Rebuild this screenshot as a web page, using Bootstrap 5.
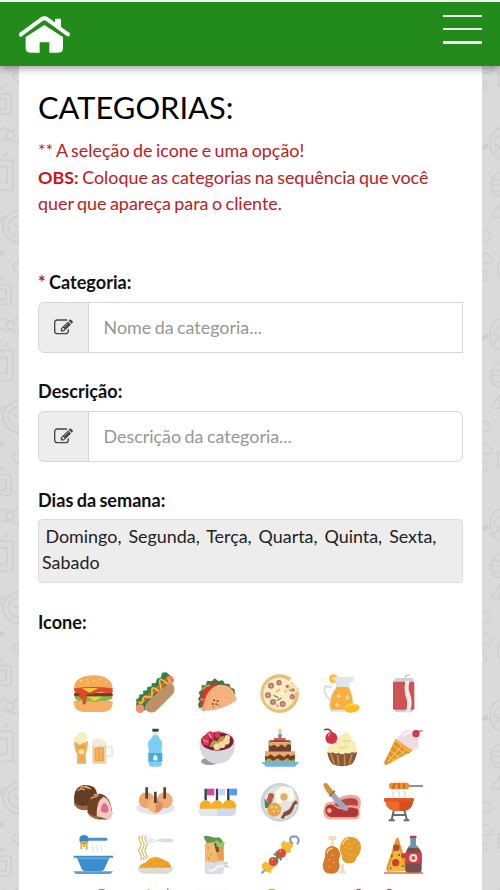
<!DOCTYPE html>
<html lang="pt-BR">
<head>
<meta charset="utf-8">
<meta name="viewport" content="width=device-width, initial-scale=1">
<title>Categorias</title>
<link href="https://cdn.jsdelivr.net/npm/bootstrap@5.3.0/dist/css/bootstrap.min.css" rel="stylesheet">
<style>
  body{font-family:Lato,"Open Sans",sans-serif;font-size:17.9px;word-spacing:-1.1px;line-height:26.6px;color:#111;background:#dadada;height:890px;overflow:hidden}
  .topbar{height:66px;background:#228b1b;border-top:2px solid #eef8ee;box-shadow:0 2px 8px rgba(0,0,0,.42);padding:0 18px 0 19px;z-index:2}
  .home-ico{width:51px;height:37px;display:block}
  .menu-btn{width:39px;height:29px;margin-top:-10px}
  .menu-btn span{height:2.5px;background:#effbed}
  .edge{width:19px;flex:none}
  .edge.right{width:18px}
  .edge svg{display:block}
  .sheet{background:#fff;padding:22px 19px 0 19px;height:824px;min-width:0}
  .page-title{font-size:30.85px;line-height:40px;font-weight:400;color:#000;margin:0 0 9px}
  .notice{color:#bb2022;height:79px;margin-bottom:53px}
  .notice b,.req{color:#cc1417}
  .field-label{font-weight:700;font-size:18.1px;line-height:26px;display:block;margin:0}
  .field{height:51px;margin-top:6.500px;margin-bottom:25.500px}
  .field .input-group-text{width:50.500px;background:#ededed;border-color:#d6d6d6;color:#444}
  .field .form-control{font-size:17.9px;word-spacing:-1.1px;border-color:#d6d6d6;padding:0 15px;color:#111}
  .field .form-control::placeholder{color:#969696;opacity:1}
  .first .form-control{border-radius:0}
  .days{background:#ededed;border:1px solid #dcdcdc;border-radius:4px;height:64px;padding:3px 3px;line-height:26px;margin:6px 0 26px;white-space:pre-wrap;color:#222}
  .icon-grid{display:grid;grid-template-columns:repeat(6,62.2px);grid-auto-rows:53.7px;margin:32.500px 0 0 24px;justify-items:center;align-items:center}
  .icon-grid svg{width:40px;height:40px;display:block;overflow:visible}
</style>
</head>
<body>
<header class="topbar d-flex justify-content-between align-items-center position-relative">
  <a href="#" aria-label="Início"><svg class="home-ico" viewBox="57 46 153 111"><path d="M62 102L124 56q9-6 18 0L204 101" fill="none" stroke="#fcfffb" stroke-width="12" stroke-linecap="round"/><path d="M165 70V57q0-3 3-3h12q3 0 3 3v28z" fill="#fcfffb"/><path d="M77 109L133 73 189 109V143q0 13-13 13H148V125H119V156H90q-13 0-13-13z" fill="#fcfffb"/></svg></a>
  <div class="menu-btn d-flex flex-column justify-content-between" role="button" aria-label="Menu"><span></span><span></span><span></span></div>
</header>
<div class="d-flex">
  <div class="edge"><svg width="19" height="824"><defs><pattern id="pl" width="19" height="190.500" patternUnits="userSpaceOnUse" y="0"><g fill="none" stroke="#cfcfcf" stroke-width="1.800"><path d="M19 6q-7 0-6 6l6 5M0 28h9q2 0 2 2v16q0 2-2 2H0M0 33h6v10H0M1 24q0-5 4-3M0 64q4-4 8 0t10-4M1 72q5 4 10 2l8 3"/><circle cx="10" cy="69" r="4"/><path d="M0 94h11q2 0 2 3v24q0 3-3 3H0M0 101h7v16H0M3 90q4 0 4-4M18 144Q3 149 3 161q1 12 16 16M18 150Q8 153 8 161q2 9 11 10M1 157q-2-4 4-7M13 158l5 3"/></g><circle cx="1" cy="187" r="3" fill="#cfcfcf"/></pattern></defs><rect width="19" height="824" fill="url(#pl)"/></svg></div>
  <main class="sheet flex-grow-1">
    <h1 class="page-title">CATEGORIAS:</h1>
    <p class="notice">** A seleção de icone e uma opção!<br><b>OBS:</b> Coloque as categorias na sequência que você quer que apareça para o cliente.</p>
    <label class="field-label" for="cat"><span class="req">*</span> Categoria:</label>
    <div class="input-group field first"><span class="input-group-text justify-content-center p-0"><svg width="19" height="19" viewBox="0 0 1792 1792" fill="currentColor"><path id="pen" d="M888 1184l116-116-152-152-116 116v56h96v96h56zm440-720q-16-16-33 1l-350 350q-17 17-1 33t33-1l350-350q17-17 1-33zm80 594v190q0 119-84.500 203.500t-203.500 84.500h-832q-119 0-203.500-84.500t-84.500-203.500v-832q0-119 84.500-203.500t203.500-84.500h832q63 0 117 25 15 7 18 23 3 17-9 29l-49 49q-14 14-32 8-23-6-45-6h-832q-66 0-113 47t-47 113v832q0 66 47 113t113 47h832q66 0 113-47t47-113v-126q0-13 9-22l64-64q15-15 35-7t20 29zm-96-738l288 288-672 672h-288v-288zm444 132l-92 92-288-288 92-92q28-28 68-28t68 28l152 152q28 28 28 68t-28 68z"/></svg></span><input id="cat" class="form-control" placeholder="Nome da categoria..."></div>
    <label class="field-label" for="desc">Descrição:</label>
    <div class="input-group field"><span class="input-group-text justify-content-center p-0"><svg width="19" height="19" viewBox="0 0 1792 1792" fill="currentColor"><use href="#pen"/></svg></span><input id="desc" class="form-control" placeholder="Descrição da categoria..."></div>
    <span class="field-label">Dias da semana:</span>
    <div class="days"> Domingo,  Segunda,  Terça,  Quarta,  Quinta,  Sexta,  Sabado</div>
    <span class="field-label">Icone:</span>
    <div class="icon-grid">
      <!-- hambúrguer -->
      <svg viewBox="39 27 120 120"><path d="M42 70Q44 32 100 31q55 1 58 39z" fill="#f3ab5c"/><path d="M60 49l6-3M80 42l5 2M99 48h5M118 41l5 2M136 49l5 3M83 55h5" stroke="#ffe4ae" stroke-width="3"/><path d="M41 108H158q1 33-31 33H74q-33 0-33-33z" fill="#f6af64"/><path d="M43 96q10 20 24 9 12 10 24 2 14 8 28 0 14 6 37-5l3-15H45z" fill="#8cb644"/><rect x="42" y="83" width="116" height="11" rx="5" fill="#7a3b28"/><path d="M42 70q57-8 116 0v11q-4 6-18 3-20-5-40 2-15 2-19 2-3 18-3 28-7 6-10-1l-2-14-6-2q-5-1-1-14-19 2-17-15z" fill="#df4b27"/><path d="M65 70l50-1-26 14zM82 95h43l-20 14z" fill="#f9cb3c"/></svg>
      <!-- cachorro-quente -->
      <svg viewBox="225 27 120 120"><path d="M229 111L316 39l18 18-81 80q-16 3-24-7z" fill="#377b42"/><path d="M227 105l11-8-1-8 13-2-1-10 12-1 1-10 13-2 0-9 12-1 4-13 12-4 3-14 13-1 20 17-96 89z" fill="#328148"/><circle cx="329" cy="45" r="13" fill="#e9826b"/><circle cx="240" cy="131" r="13" fill="#ec936e"/><path d="M239 116L326 43" stroke="#de6039" stroke-width="11"/><path d="M235 112q14 6 14-8t15-8 12-15 15-6 10-15 17-7 6-12" fill="none" stroke="#f4c43c" stroke-width="5"/><path d="M254 133q-1-16 21-35l41-36q15-14 24-2 8 17-3 29l-48 48q-17 13-35-4z" fill="#bd9163"/></svg>
      <!-- taco -->
      <svg viewBox="37 27 120 120"><path d="M43 130l-3-13 5-7-5-9 6-8-4-12 9-6 0-14 12-1 5-13 13 2 9-9 11 8 13-2 7 10 13 0 3 11 12 5 3 16-15 16z" fill="#4a713e"/><path d="M47 109q4-26 13-37 19-18 39-13 23 0 34 15l-77 65z" fill="#d7342d"/><path d="M54 73q10-14 22-11M47 102l10 3" stroke="#93b451" stroke-width="6" fill="none"/><path d="M40 132q12 6 19-19 12-53 52-54 37 2 45 47-41 29-84 31-30 0-32-5z" fill="#f3b27e"/><path d="M53 119q6-35 35-54l-14 37-10 34-17-3z" fill="#e99e6b" opacity=".3"/><g fill="#72462d"><circle cx="88" cy="106" r="3"/><circle cx="99" cy="108" r="3"/><circle cx="84" cy="117" r="3"/><circle cx="95" cy="118" r="3"/><circle cx="103" cy="121" r="2"/><circle cx="86" cy="126" r="2"/></g></svg>
      <!-- pizza -->
      <svg viewBox="223 27 120 120"><circle cx="282" cy="86" r="58" fill="#e7c07b"/><circle cx="281" cy="86" r="48" fill="#f8ecc6"/><path d="M289 89L319 35l27 30z" fill="#fff"/><path d="M295 73l22-25q17 12 23 34l-36-2z" fill="#f4dfad"/><g fill="#b97567"><circle cx="256" cy="62" r="9"/><circle cx="280" cy="53" r="8"/><circle cx="247" cy="91" r="9"/><circle cx="262" cy="111" r="9"/><circle cx="291" cy="117" r="9"/><circle cx="320" cy="95" r="8"/><circle cx="305" cy="64" r="5"/><circle cx="322" cy="75" r="5"/></g><g fill="#dca08d"><circle cx="256" cy="62" r="4"/><circle cx="280" cy="53" r="3"/><circle cx="247" cy="91" r="4"/><circle cx="262" cy="111" r="4"/><circle cx="291" cy="117" r="4"/><circle cx="320" cy="95" r="3"/></g><path d="M264 91l14 7M274 106l14-7" stroke="#669556" stroke-width="4"/><path d="M271 81l13-9M294 80h10" stroke="#ebc246" stroke-width="5"/><path d="M273 119l5 7M311 72l6 7" stroke="#a84d4b" stroke-width="3"/></svg>
      <!-- jarra de suco -->
      <svg viewBox="36 27 120 120"><circle cx="70" cy="41" r="13" fill="#ffba30"/><circle cx="70" cy="41" r="6" fill="#ffdc75"/><path d="M66 68q-23-10-23 6 4 23 19 31" fill="none" stroke="#d9e1e7" stroke-width="7"/><path d="M70 36h62l-4 14q-14 3-10 18 19 28 12 74H63q-16-39 15-74-1-19-8-32z" fill="#e0e5e9"/><path d="M80 66h35q15 27 12 68H63q-10-29 17-68z" fill="#f9ae3f"/><path d="M79 90l10-4 4 10-10 4zM105 93l10-2 5 10-11 4zM74 118l9-6 7 9-9 7z" fill="#ffd786"/><ellipse cx="126" cy="130" rx="23" ry="13" fill="#ffbb20" transform="rotate(-8 126 130)"/><path d="M104 129q13-18 35-7" stroke="#ffd24d" stroke-width="5" fill="none"/></svg>
      <!-- refrigerante -->
      <svg viewBox="222 27 120 120"><path d="M285 42l3-10 12-2" stroke="#c2c9cc" stroke-width="4" fill="none"/><path d="M256 39h51l5 10v82l-7 11h-47l-8-11V49z" fill="#cbd0d2"/><rect x="249" y="50" width="64" height="84" rx="4" fill="#cf5353"/><path d="M286 47h14q-9 20 1 42 9 27-2 51h-11q8-27-2-49-5-22 0-44z" fill="#f8eaea"/></svg>
      <!-- chope -->
      <svg viewBox="39 189 120 120"><path d="M42 229h42q-1 25-7 39l1 28H51l1-27q-9-13-10-40z" fill="#e9b067"/><path d="M50 238h26l-7 29 1 23H58V263z" fill="#f5a83a"/><path d="M43 232q-4-21 8-20 5-17 19-10 13 2 13 20l-5 11q-10-3-16 6-9 2-10-5z" fill="#fbedc2"/><circle cx="64" cy="260" r="8" fill="#f7dfb2"/><rect x="97" y="235" width="42" height="61" rx="3" fill="#efd0ad"/><rect x="104" y="247" width="28" height="42" rx="3" fill="#eda448"/><path d="M112 250v36M123 250v36" stroke="#f9bd6b" stroke-width="4"/><path d="M97 238q-5-16 10-15 11-7 19 1 14 0 13 14l-8 7q-11-7-17 0-12 6-17-7z" fill="#f4eadb"/><path d="M140 245h12q4 0 4 4v21q0 4-4 4h-12" fill="none" stroke="#e5e8ec" stroke-width="6"/></svg>
      <!-- garrafa de água -->
      <svg viewBox="225 189 120 120"><rect x="277" y="191" width="19" height="9" rx="2" fill="#38454f"/><path d="M280 204h13v9h-13z" fill="#cfe8f3"/><path d="M279 211h15q2 9 11 17 4 11 0 22v46q0 9-9 9h-20q-10 0-10-9v-46q-5-12 0-22 10-7 13-17z" fill="#7ecdf5"/><path d="M265 264h42v26h-42z" fill="#4dabdc"/><path d="M286 268q-14 18 0 19 14-1 0-19z" fill="#e9faff"/></svg>
      <!-- açaí -->
      <svg viewBox="37 189 120 120"><ellipse cx="75" cy="289" rx="26" ry="11" fill="#9c9c9c"/><ellipse cx="98" cy="228" rx="54" ry="34" fill="#ededf0"/><path d="M44 231q0 43 30 59 23 12 49 0 28-16 29-60-17 24-54 27-37-3-54-26z" fill="#d7d8dd"/><ellipse cx="98" cy="229" rx="49" ry="28" fill="#77203d"/><path d="M49 221l18-10 8 13-3 18-16-2zM64 206l13-8 12 10-3 20-16-13zM89 201l16-2 1 17-13 6z" fill="#df3455"/><path d="M56 225l14 6M72 206l8 13" stroke="#f9a9a7" stroke-width="4"/><path d="M79 232l8-7 11 3 8-13 11-2 5 13-17 10-14 11-17-2z" fill="#b5944d"/><g fill="#f2df9c" stroke="#d3b668"><circle cx="97" cy="245" r="10"/><circle cx="112" cy="239" r="10"/><circle cx="125" cy="229" r="10"/><circle cx="128" cy="218" r="8"/></g></svg>
      <!-- bolo -->
      <svg viewBox="223 189 120 120"><path d="M283 190q-11 12 0 15 10-3 0-15z" fill="#ffc356"/><path d="M278 206h10v16h-10z" fill="#5793c2"/><path d="M265 219h35v10h-35z" fill="#e25b57"/><path d="M249 231q0-5 6-5h55q6 0 6 5v29h-67z" fill="#6e4035"/><path d="M249 230h67v10l-9-3-9 10-10-9-12 9-10-8-12 5-5-4z" fill="#e5a76c"/><path d="M238 260h90v34h-90z" fill="#704131"/><path d="M238 260h90v9l-13 4-8-6-12 9-13-8-15 8-13-8-9 7-7-3z" fill="#eba96c"/><path d="M239 285l11-5 13 8 12-8 15 8 13-8 14 7 10-6v13h-88z" fill="#a5b050"/><path d="M226 291h115l-13 14h-86z" fill="#71b5dc"/></svg>
      <!-- cupcake -->
      <svg viewBox="36 189 120 120"><path d="M53 262q-5-16 9-22-5-16 13-21 20-2 34-22 5 11 10 13 6 6 3 13 16 8 14 20 9 8 3 22-40 18-86-3z" fill="#f8edb4"/><path d="M98 228q12 3 23-2M86 247q14 4 28-1M67 233q10 2 17-3" fill="none" stroke="#dfce87" stroke-width="3"/><path d="M52 260q8 7 16 2 9 8 17 1 13 9 22 0 10 6 19-2 9 5 16-1-7 29-17 38-28 12-57 0-13-13-16-38z" fill="#8a5836"/><path d="M63 266l9 30M83 270l3 31M104 269v33M126 266l-8 32" stroke="#c48b52" stroke-width="5"/><circle cx="64" cy="219" r="18" fill="#cf3449"/><path d="M65 203q-6-15-23-8" stroke="#8c3034" stroke-width="4" fill="none"/><path d="M55 214q1-7 7-8" stroke="#f38d88" stroke-width="4" fill="none"/></svg>
      <!-- sorvete -->
      <svg viewBox="222 189 120 120"><path d="M257 222l45 35q-2 10-8 8l-65 35q-8-1-6-9z" fill="#dc912c"/><path d="M248 239l38 30M240 255l28 23M233 271l22 18M278 239l-45 52M292 251l-52 44" stroke="#f7bd4d" stroke-width="4"/><path d="M262 223q1-11 11-12 9-21 32-14 20 10 20 33 5 19-11 23-5 11-20 3-18-9-32-33z" fill="#efdce1"/><path d="M279 214q12-17 28-8" stroke="#fff4f4" stroke-width="6" fill="none"/><circle cx="318" cy="206" r="11" fill="#d6384e"/><path d="M321 200l17-3" stroke="#90313b" stroke-width="3"/><path d="M258 221q-9 10 3 13 18 20 36 28 13-1 8-9-18-8-47-32z" fill="#f3ac40"/></svg>
      <!-- bombons -->
      <svg viewBox="39 18 120 120"><path d="M43 82q-6-51 31-55 37-1 37 31L95 99q-35 10-52-17z" fill="#643b27"/><path d="M43 80q22 18 47 4v16q-31 9-47-13z" fill="#9a6a40"/><path d="M53 44q9-9 22-2M61 35q10-7 26 3M75 29l18 10" stroke="#dda46c" stroke-width="4" fill="none"/><path d="M83 110q-7-48 32-57 35-1 42 57-2 16-13 20-45 4-61-20z" fill="#704327"/><path d="M84 108q14 15 32 11l4 12q-26-3-36-18z" fill="#9a6a40"/><path d="M110 120q-2-44 20-58 21 5 27 54-3 14-16 14z" fill="#f5cabc"/><path d="M122 104q1-20 12-23 13 6 11 26-14 7-23-3z" fill="#da6d9b"/><path d="M92 69q5-8 19-7M101 57q8-2 15 2" stroke="#e2aa78" stroke-width="4" fill="none"/></svg>
      <!-- coxinhas -->
      <svg viewBox="225 18 120 120"><ellipse cx="287" cy="96" rx="58" ry="20" fill="#e3e5ec"/><circle cx="260" cy="73" r="24" fill="#efa66b"/><circle cx="314" cy="73" r="24" fill="#f0ad75"/><path d="M286 59l24 24q1 22-24 29-24-7-24-29z" fill="#f8b576"/><path d="M287 62l22 23q0 20-22 26z" fill="#df8f5c"/><path d="M260 34v34M286 47v34M314 34v34" stroke="#534044" stroke-width="8"/></svg>
      <!-- petiscos -->
      <svg viewBox="37 18 120 120"><g fill="#f5af22"><circle cx="63" cy="91" r="18"/><circle cx="97" cy="91" r="18"/><circle cx="134" cy="91" r="20"/></g><path d="M40 98h115q-1 22-18 22H58q-17 0-18-22z" fill="#dfe7f3"/><path d="M98 98h57q-1 22-18 22H98z" fill="#cddbf0"/><path d="M63 38v35M97 38v35M131 38v35" stroke="#303d5b" stroke-width="7"/><path d="M67 38h22v20H67z" fill="#db498e"/><path d="M101 38h20v20h-20z" fill="#c6d7f1"/><path d="M135 38h22v20h-22z" fill="#559bee"/></svg>
      <!-- prato feito -->
      <svg viewBox="223 18 120 120"><circle cx="283" cy="79" r="58" fill="#ccd3d4"/><circle cx="283" cy="79" r="50" fill="#e1e4e1"/><path d="M269 61q-5-19 9-18 8-17 25-11 24 2 20 19 10 20-10 25l-17-2-14 11q-17-4-13-24z" fill="#fff8eb"/><circle cx="295" cy="63" r="11" fill="#e0ae63"/><circle cx="256" cy="60" r="9" fill="#c65644"/><circle cx="252" cy="72" r="9" fill="#cc5744"/><path d="M236 67l10 13 12-6-8 23-12-2z" fill="#547e63"/><circle cx="266" cy="101" r="21" fill="#e6a447"/><g fill="#f5cb72"><circle cx="258" cy="94" r="4"/><circle cx="272" cy="94" r="4"/><circle cx="265" cy="106" r="4"/><circle cx="278" cy="105" r="3"/></g><path d="M285 125l10-17q20-6 26-27l10-9 5 10-9 5q-6 30-29 34l-4 8z" fill="#82503a"/></svg>
      <!-- carne -->
      <svg viewBox="36 18 120 120"><path d="M42 96q1-20 24-18 26-18 48-21 23-3 35 8 8 15-1 34 7 32-15 31H55q-20-8-13-34z" fill="#f1a69b"/><path d="M72 86q25-21 53-19 19 0 19 14 0 16-18 17l-25 5z" fill="#b54644"/><path d="M66 85q18 18 35 10 20-8 43 0" fill="none" stroke="#f1a69b" stroke-width="7"/><path d="M48 93q6-11 21-6 18 18 35 10 20-4 40 2 5 22-9 24H60q-19-9-12-30z" fill="#af3836"/><circle cx="58" cy="104" r="7" fill="#f2b4a6"/><path d="M60 59l12-10 34 37q13 11 7 18-13 3-25-11z" fill="#9aa8b8"/><path d="M40 26q1-8 11-4l24 28-13 12q-19-21-22-36z" fill="#d9923c"/><path d="M58 61l17-17" stroke="#617585" stroke-width="4"/></svg>
      <!-- churrasqueira -->
      <svg viewBox="222 18 120 120"><path d="M294 30h45" stroke="#704e57" stroke-width="4"/><rect x="237" y="20" width="61" height="20" rx="9" fill="#ef8e30"/><path d="M254 22l-6 16M267 21v17M282 21v17" stroke="#b85429" stroke-width="4"/><path d="M245 46q9 6 3 18M263 45q10 8 3 19M280 45q10 8 3 19" stroke="#d9dddf" stroke-width="4" fill="none"/><path d="M253 96l-8 36M281 96l10 36M247 117h42M236 133h18M281 133h17" stroke="#566f7a" stroke-width="6"/><path d="M225 75h84q-2 27-27 30h-30q-24-5-27-30z" fill="#f06b25"/><path d="M268 75h41q-2 27-27 30h-14z" fill="#d6501f"/><rect x="222" y="66" width="90" height="11" rx="4" fill="#e35625"/></svg>
      <!-- caldo -->
      <svg viewBox="39 180 120 120"><path d="M69 193h69" stroke="#4b92cd" stroke-width="9" stroke-linecap="round"/><circle cx="72" cy="194" r="14" fill="#3789ca"/><path d="M63 202h17v22M64 202v20M72 207v9" stroke="#e9b142" stroke-width="6" fill="none"/><path d="M99 209q-4 6 0 11t-1 11M111 209q-4 6 0 11t-1 11M124 209q-4 6 0 11t-1 11" stroke="#dcdddf" stroke-width="3" fill="none"/><path d="M41 242h118v6h-11l-15 34q-4 7-12 7H78q-9 0-13-7l-14-34H41z" fill="#398fcd"/><path d="M55 250h89" stroke="#67acdc" stroke-width="5"/><path d="M40 289h119l-8 8H48z" fill="#5d9dcb"/></svg>
      <!-- macarrão -->
      <svg viewBox="225 180 120 120"><path d="M240 181q-8 9 0 18t0 19 0 18 2 20M249 182q-8 9 0 18t0 19 0 18 0 18M258 181q-8 9 0 18t0 19 0 18-2 18" stroke="#daa843" stroke-width="3" fill="none"/><path d="M283 196q20-7 52-5 6 2 5 7-2 5-10 4-28 2-47-6z" fill="#dcdde2"/><path d="M254 192h19q7 0 12 4-5 5-12 6h-18M256 197h20" stroke="#dcdde2" stroke-width="3" fill="none"/><path d="M236 279q6-14 20-16 11-15 31-17 17 2 25 10 18 2 22 23z" fill="#ee9d25"/><path d="M248 274q20-23 40-22M271 275q10-12 26-11M297 276q4-10 16-11" stroke="#f5b651" stroke-width="2" fill="none"/><path d="M232 278h109q-8 18-24 18h-65q-17-2-20-18z" fill="#dedad4"/></svg>
      <!-- burrito -->
      <svg viewBox="37 180 120 120"><path d="M61 207l8-11 48 5v65H61z" fill="#f0b96f"/><path d="M93 216l24-14v56l-17-5z" fill="#e79e4c"/><path d="M57 186q5-7 16-2l19 4q13-4 18 5l9 14-9 13-13-3-8-15-21 2-7-8z" fill="#669548"/><path d="M86 201l11-5 9 7 14-2-3 15-14 4z" fill="#92c965"/><path d="M91 205l7 27M99 216l2 14" stroke="#765132" stroke-width="6"/><path d="M69 219h3M78 239h3M70 250h3" stroke="#b77b3f" stroke-width="5"/><path d="M60 257q27 11 57-1v34q-2 8-11 8H68q-8-1-8-9z" fill="#dbdee0"/><path d="M72 286q15 3 22-6t23-7" stroke="#f5f5f6" stroke-width="7" fill="none"/><path d="M115 265l12-2-7 10 12 3" stroke="#c5cbd0" stroke-width="4" fill="none"/></svg>
      <!-- espetinho -->
      <svg viewBox="223 180 120 120"><path d="M228 295L319 205q-14-18 6-21 15 0 14 15-2 7-6 8" stroke="#8399a5" stroke-width="6" fill="none"/><path d="M286 206l9-10 7 7 9-4 12 14-8 9 1 9-13 4-6-9-8-1z" fill="#f1bd33"/><path d="M228 269l10-10 8 5 10-5 11 17-9 9-2 9-14-3-5-8-7 0z" fill="#f1bd33"/><circle cx="287" cy="235" r="14" fill="#dc4c3e"/><circle cx="263" cy="260" r="14" fill="#dc4c3e"/><path d="M263 238q14 0 24 18M272 229l4 34" stroke="#648449" stroke-width="6" fill="none"/><path d="M282 231l4-5M258 256l4-5" stroke="#f69a87" stroke-width="4"/></svg>
      <!-- frango -->
      <svg viewBox="36 180 120 120"><path d="M67 223v-27M98 267v24" stroke="#f3dfb6" stroke-width="9"/><g fill="#f3dfb6"><circle cx="62" cy="189" r="7"/><circle cx="73" cy="189" r="7"/><circle cx="94" cy="292" r="5"/><circle cx="103" cy="292" r="5"/></g><path d="M62 213q27-1 29 30-8 8-2 29-2 25-25 24-26 0-26-27 4-12 7-24-2-26 17-32z" fill="#d8782c"/><path d="M120 185q31 0 33 32-1 20-13 30-3 19-23 18-24-2-21-23-10-18-4-35 8-22 28-22z" fill="#e49c2c"/><g fill="#f6cf77"><circle cx="116" cy="207" r="2"/><circle cx="107" cy="217" r="2"/><circle cx="123" cy="220" r="2"/><circle cx="132" cy="204" r="2"/><circle cx="108" cy="236" r="2"/><circle cx="121" cy="239" r="2"/><circle cx="67" cy="240" r="2"/><circle cx="58" cy="254" r="2"/><circle cx="71" cy="263" r="2"/><circle cx="58" cy="276" r="2"/></g><path d="M98 208q5-16 18-17M51 235q4-15 16-15" stroke="#ffd98b" stroke-width="4" fill="none"/></svg>
      <!-- pizza e refrigerante -->
      <svg viewBox="222 180 120 120"><path d="M262 189l33 98-65 4z" fill="#f5b637"/><path d="M258 191q6-8 9 3l26 87q0 9-7 8L263 203l-30 85q-6-3-4-9z" fill="#e09b2c"/><circle cx="259" cy="218" r="10" fill="#bd4932"/><circle cx="257" cy="263" r="11" fill="#bd4932"/><circle cx="281" cy="242" r="8" fill="#bd4932"/><path d="M243 243h5M265 240h5M276 273h4M240 280h4" stroke="#6e5e35" stroke-width="6"/><rect x="300" y="182" width="19" height="8" rx="2" fill="#ad433f"/><path d="M302 190h15v19q18 15 18 31v43q0 12-13 12h-24q-12 0-12-12v-43q2-19 16-31z" fill="#74504d"/><path d="M302 190h15v19l8 10h-31l8-10z" fill="#6499aa"/><path d="M286 232h49v34h-49z" fill="#ca4044"/><circle cx="310" cy="249" r="12" fill="#f7e4da"/><circle cx="310" cy="249" r="6" fill="#cf4d50"/><path d="M222 294h117" stroke="#cc7462" stroke-width="4"/></svg>
      <!-- linha seguinte, cortada pela borda da janela -->
      <svg viewBox="39 342 120 120"><ellipse cx="125" cy="351" rx="16" ry="9" fill="#b6605d"/></svg>
      <svg viewBox="225 342 120 120"><path d="M258 347l8-6 8 6z" fill="#edbd50"/><path d="M320 347l3-8 5 8z" fill="#99795b"/></svg>
      <svg viewBox="37 342 120 120"><path d="M38 347h93" stroke="#eee" stroke-width="5"/></svg>
      <svg viewBox="223 342 120 120"><ellipse cx="258" cy="347" rx="12" ry="6" fill="#d9ac55"/></svg>
      <svg viewBox="36 342 120 120"><ellipse cx="146" cy="348" rx="8" ry="7" fill="#a25554"/></svg>
      <svg viewBox="222 342 120 120"><ellipse cx="238" cy="348" rx="8" ry="7" fill="#a25554"/></svg>
    </div>
  </main>
  <div class="edge right"><svg width="18" height="824"><defs><pattern id="pr" width="19" height="190.500" patternUnits="userSpaceOnUse"><g fill="none" stroke="#d0d0d0" stroke-width="1.600"><path d="M1 7h6q5-4 3-8M0 15h4v9H1M19 6h-3v14h3M19 61Q8 65 8 78q0 13 11 16M19 68q-7 4-7 10l7 4M11 88l8-9M19 106q-10 2-10 13t10 12M9 114h10M9 119h10M9 125h10M9 151l9-13v14zM0 165h6q5 4 0 10H0M0 187h5q6 6 0 12H0"/></g><path d="M0 80l6-3v5l-6 2z" fill="#cdcdcd"/></pattern></defs><rect width="19" height="824" fill="url(#pr)"/></svg></div>
</div>
<script src="https://cdn.jsdelivr.net/npm/bootstrap@5.3.0/dist/js/bootstrap.bundle.min.js"></script>
</body>
</html>
